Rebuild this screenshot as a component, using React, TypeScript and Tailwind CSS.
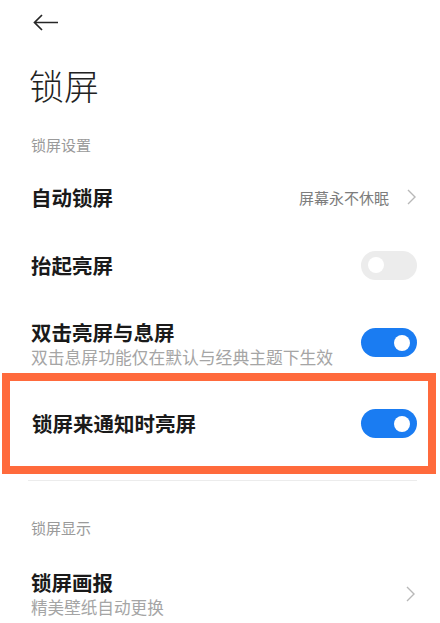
import React from "react";

const font = { fontFamily: '"Noto Sans CJK SC", "Noto Sans", sans-serif' };

const Chevron = () => (
    <svg width="9" height="16" viewBox="0 0 9 16" fill="none">
        <path d="M1 1 L8 8 L1 15" stroke="#b8b8b8" strokeWidth="1.4" />
    </svg>
);

const Toggle = ({ on }: { on: boolean }) => (
    <div
        className={`w-[56px] h-[29px] rounded-full flex items-center px-[7px] ${
            on ? "bg-[#1a7cf2] justify-end" : "bg-[#ececec] justify-start"
        }`}
    >
        <div className="w-[16px] h-[16px] rounded-full bg-white" />
    </div>
);

const App = () => {
    return (
        <div className="w-[440px] h-[623px] bg-white overflow-hidden text-[#1a1a1a]" style={font}>
            {/* Header */}
            <div className="h-[42px] pl-[33px] pt-[14px]">
                <svg width="25" height="17" viewBox="0 0 25 17" fill="none">
                    <path d="M9 1 L1.5 8.5 L9 16 M1.5 8.5 H25" stroke="#262626" strokeWidth="1.7" />
                </svg>
            </div>
            <div className="h-[84px] pl-[29px] flex items-center text-[35px] font-light leading-none text-[#222]">
                锁屏
            </div>
            <div className="h-[37px] pl-[31px] flex items-start text-[15px] leading-none text-[#9a9a9a] pt-[11px]">
                锁屏设置
            </div>

            {/* 自动锁屏 */}
            <div className="h-[68px] pl-[31px] pr-[24px] flex items-center justify-between">
                <span className="text-[20.5px] font-bold leading-none">自动锁屏</span>
                <div className="flex items-center gap-[18px]">
                    <span className="text-[15px] leading-none text-[#7d7d7d]">屏幕永不休眠</span>
                    <Chevron />
                </div>
            </div>

            {/* 抬起亮屏 */}
            <div className="h-[68px] pl-[31px] pr-[23px] flex items-center justify-between">
                <span className="text-[20.5px] font-bold leading-none">抬起亮屏</span>
                <Toggle on={false} />
            </div>

            {/* 双击亮屏与息屏 */}
            <div className="h-[74px] pl-[31px] pr-[23px] flex items-start justify-between">
                <div className="flex flex-col gap-[6px] pt-[23px]">
                    <span className="text-[20.5px] font-bold leading-none">双击亮屏与息屏</span>
                    <span className="text-[16.8px] leading-none text-[#a5a5a5]">
                        双击息屏功能仅在默认与经典主题下生效
                    </span>
                </div>
                <div className="mt-[29px]">
                    <Toggle on={true} />
                </div>
            </div>

            {/* highlighted row */}
            <div className="ml-[2px] mr-[4px] h-[101px] border-[8px] border-[#ff6a3c] pl-[22px] pr-[11px] flex items-center justify-between">
                <span className="text-[20.5px] font-bold leading-none">锁屏来通知时亮屏</span>
                <Toggle on={true} />
            </div>

            <div className="mt-[6px] ml-[28px] mr-[23px] h-px bg-[#ececec]" />

            <div className="h-[88px] pl-[31px] flex items-center text-[15px] leading-none text-[#9a9a9a] pt-[5px]">
                锁屏显示
            </div>

            {/* 锁屏画报 */}
            <div className="pl-[31px] pr-[25px] flex items-center justify-between mt-[3px]">
                <div className="flex flex-col gap-[6px]">
                    <span className="text-[20.5px] font-bold leading-none">锁屏画报</span>
                    <span className="text-[16.6px] leading-none text-[#a5a5a5]">精美壁纸自动更换</span>
                </div>
                <Chevron />
            </div>
        </div>
    );
};

export default App;
